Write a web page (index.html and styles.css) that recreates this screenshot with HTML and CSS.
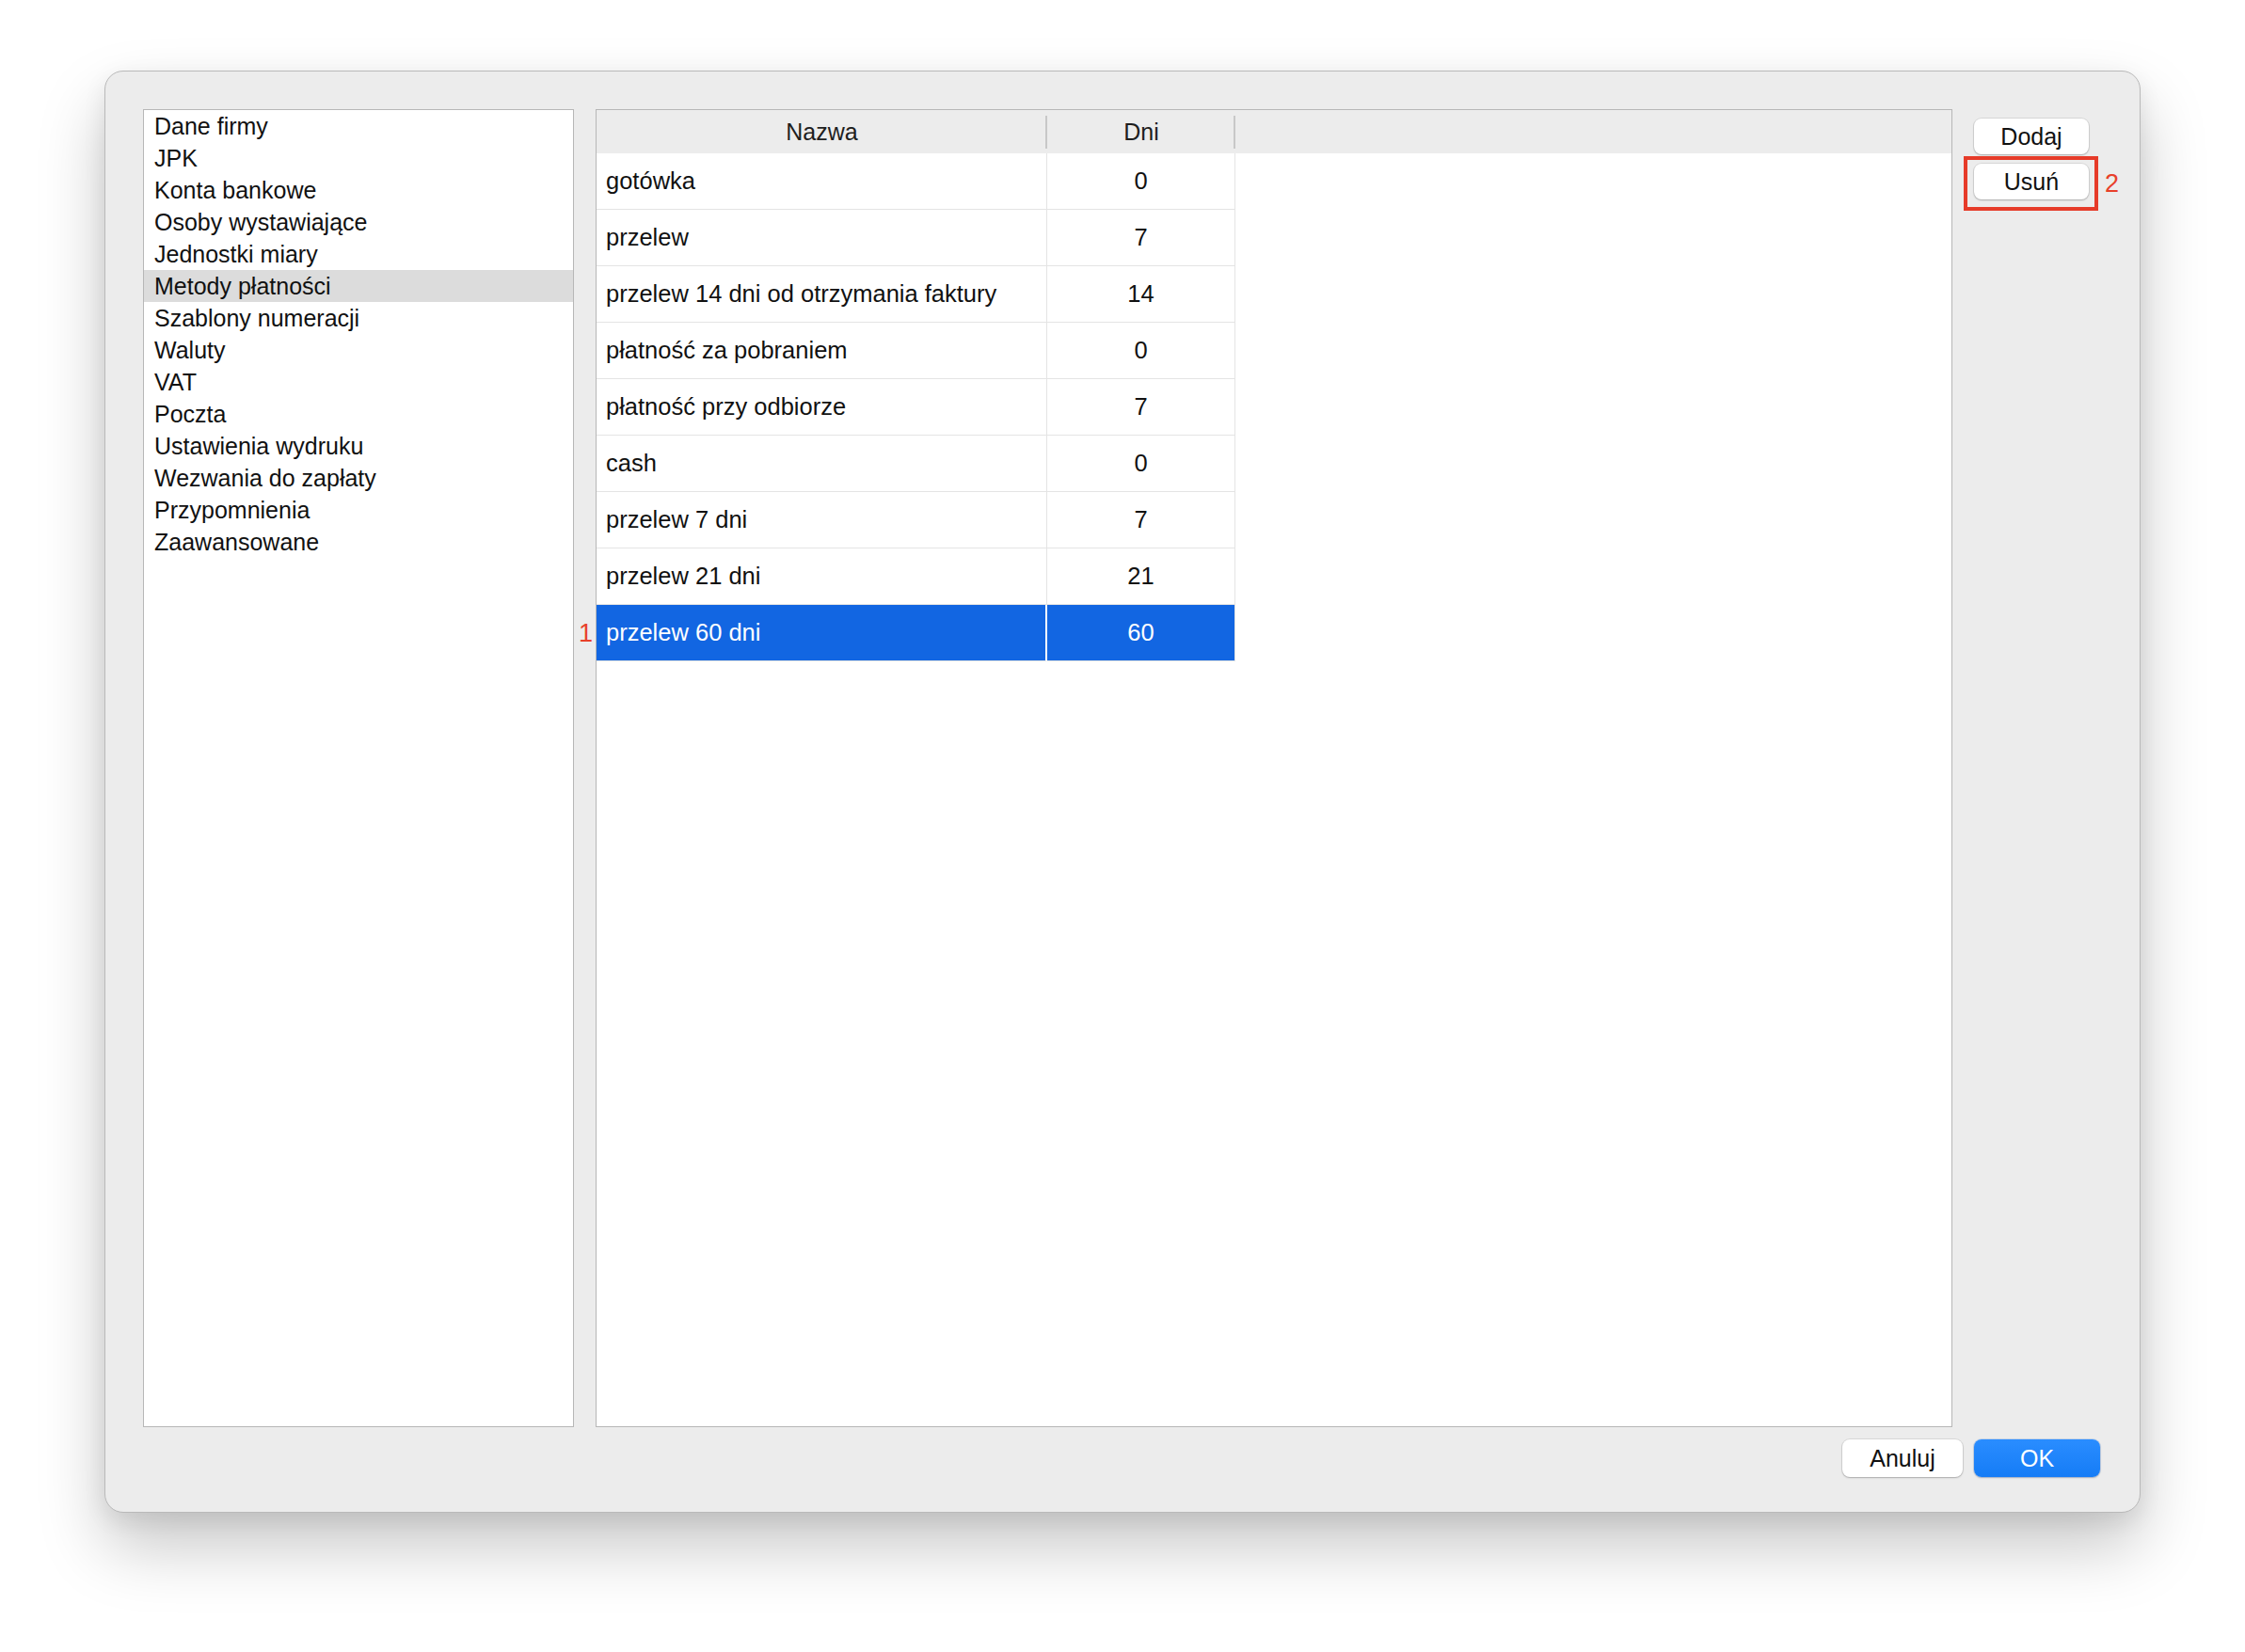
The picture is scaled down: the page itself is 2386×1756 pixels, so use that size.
FILE: index.html
```html
<!DOCTYPE html>
<html lang="pl">
<head>
<meta charset="utf-8">
<title>Ustawienia</title>
<link rel="stylesheet" href="styles.css">
</head>
<body>
<div class="window">
  <div class="main">
    <div class="sidebar">
      <div class="item">Dane firmy</div>
      <div class="item">JPK</div>
      <div class="item">Konta bankowe</div>
      <div class="item">Osoby wystawiające</div>
      <div class="item">Jednostki miary</div>
      <div class="item active">Metody płatności</div>
      <div class="item">Szablony numeracji</div>
      <div class="item">Waluty</div>
      <div class="item">VAT</div>
      <div class="item">Poczta</div>
      <div class="item">Ustawienia wydruku</div>
      <div class="item">Wezwania do zapłaty</div>
      <div class="item">Przypomnienia</div>
      <div class="item">Zaawansowane</div>
    </div>
    <div class="table">
      <div class="thead">
        <div class="th">Nazwa</div>
        <div class="th">Dni</div>
      </div>
      <div class="row"><div class="cell name">gotówka</div><div class="cell days">0</div></div>
      <div class="row"><div class="cell name">przelew</div><div class="cell days">7</div></div>
      <div class="row"><div class="cell name">przelew 14 dni od otrzymania faktury</div><div class="cell days">14</div></div>
      <div class="row"><div class="cell name">płatność za pobraniem</div><div class="cell days">0</div></div>
      <div class="row"><div class="cell name">płatność przy odbiorze</div><div class="cell days">7</div></div>
      <div class="row"><div class="cell name">cash</div><div class="cell days">0</div></div>
      <div class="row"><div class="cell name">przelew 7 dni</div><div class="cell days">7</div></div>
      <div class="row"><div class="cell name">przelew 21 dni</div><div class="cell days">21</div></div>
      <div class="row selected"><span class="marker marker-1">1</span><div class="cell name">przelew 60 dni</div><div class="cell days">60</div></div>
    </div>
    <div class="side-buttons">
      <button class="btn">Dodaj</button>
      <div class="highlight">
        <button class="btn">Usuń</button>
        <span class="hl-box"></span>
        <span class="marker marker-2">2</span>
      </div>
    </div>
  </div>
  <div class="footer">
    <button class="btn btn-cancel">Anuluj</button>
    <button class="btn btn-ok">OK</button>
  </div>
</div>
</body>
</html>
```

FILE: styles.css
```css
* { box-sizing: border-box; }

html, body {
  margin: 0;
  padding: 0;
  background: #ffffff;
}

body {
  font-family: "Liberation Sans", Arial, Helvetica, sans-serif;
  color: #111111;
  padding: 75px 0 0 111px;
  width: 2386px;
  height: 1756px;
  overflow: hidden;
}

.window {
  width: 2164px;
  height: 1533px;
  background: #ececec;
  border: 1px solid #b9b9b9;
  border-radius: 20px;
  box-shadow: 0 36px 70px rgba(0, 0, 0, 0.22), 0 8px 24px rgba(0, 0, 0, 0.08);
  padding: 40px 42px 37px 40px;
  display: flex;
  flex-direction: column;
}

.main {
  display: flex;
  gap: 23px;
  height: 1401px;
}

.sidebar {
  width: 458px;
  height: 1401px;
  background: #ffffff;
  border: 1px solid #b7b7b7;
  flex: none;
}

.item {
  height: 34px;
  line-height: 34px;
  padding-left: 11px;
  font-size: 25px;
  color: #111111;
  white-space: nowrap;
}

.item.active {
  background: #dcdcdc;
}

.table {
  position: relative;
  width: 1442px;
  height: 1401px;
  background: #ffffff;
  border: 1px solid #b7b7b7;
  flex: none;
}

.thead {
  display: grid;
  grid-template-columns: 479px 200px;
  height: 46px;
  background: #ececec;
}

.th {
  position: relative;
  text-align: center;
  line-height: 46px;
  font-size: 25px;
  color: #1e1e1e;
}

.th::after {
  content: "";
  position: absolute;
  right: 0;
  top: 6px;
  bottom: 5px;
  width: 2px;
  background: #c8c8c8;
}

.row {
  position: relative;
  display: grid;
  grid-template-columns: 479px 200px;
  height: 60px;
}

.cell {
  border-bottom: 1px solid #e4e4e4;
  border-right: 1px solid #e4e4e4;
  line-height: 59px;
  font-size: 25.5px;
  color: #111111;
  white-space: nowrap;
}

.cell.name {
  padding-left: 10px;
}

.cell.days {
  text-align: center;
}

.row.selected .cell {
  background: #1266e2;
  color: #ffffff;
}

.row.selected .cell.name {
  border-right: 2px solid #ffffff;
}

.marker {
  position: absolute;
  color: #e8402a;
  font-size: 27px;
  line-height: 1;
}

.marker-1 {
  left: -19px;
  top: 17px;
}

.side-buttons {
  display: flex;
  flex-direction: column;
  gap: 10px;
  padding-top: 10px;
}

.btn {
  font-family: "Liberation Sans", Arial, Helvetica, sans-serif;
  font-size: 25px;
  color: #111111;
  background: #ffffff;
  border: none;
  border-radius: 8px;
  box-shadow: 0 0 0 1px rgba(0, 0, 0, 0.08), 0 1px 2px rgba(0, 0, 0, 0.22);
  width: 122px;
  height: 38px;
  padding: 0;
  line-height: 38px;
}

.highlight {
  position: relative;
  width: 122px;
}

.hl-box {
  position: absolute;
  left: -11px;
  top: -8px;
  right: -10px;
  bottom: -12px;
  border: 4px solid #e63b29;
}

.marker-2 {
  left: 139px;
  top: 8px;
}

.footer {
  display: flex;
  justify-content: flex-end;
  gap: 12px;
  margin-top: 13px;
}

.btn-cancel {
  width: 128px;
  height: 40px;
}

.btn-ok {
  width: 134px;
  height: 40px;
  color: #ffffff;
  background: linear-gradient(#2a8dff, #157cf6);
  box-shadow: 0 0 0 1px rgba(0, 80, 200, 0.15), 0 1px 2px rgba(0, 0, 0, 0.2);
}
```
